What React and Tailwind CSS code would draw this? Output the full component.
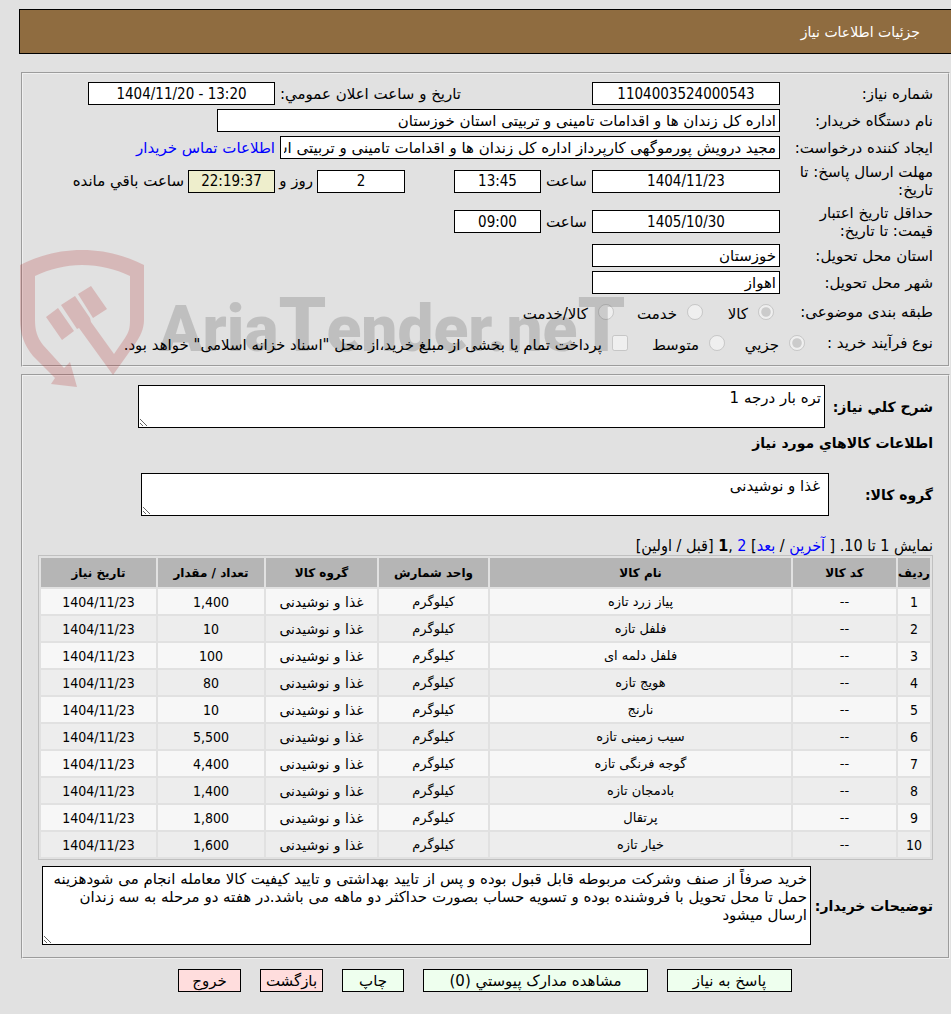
import React from 'react'

const columns = ['ردیف', 'کد کالا', 'نام کالا', 'واحد شمارش', 'گروه کالا', 'تعداد / مقدار', 'تاریخ نیاز']

const items = [
  { name: 'پیاز زرد تازه', count: '1,400' },
  { name: 'فلفل تازه', count: '10' },
  { name: 'فلفل دلمه ای', count: '100' },
  { name: 'هویج تازه', count: '80' },
  { name: 'نارنج', count: '10' },
  { name: 'سیب زمینی تازه', count: '5,500' },
  { name: 'گوجه فرنگی تازه', count: '4,400' },
  { name: 'بادمجان تازه', count: '1,400' },
  { name: 'پرتقال', count: '1,800' },
  { name: 'خیار تازه', count: '1,600' },
]

// digits are set in the condensed face, Persian text in the regular one
const digits = "font-['DejaVu_Sans_Condensed','DejaVu_Sans',sans-serif]"
const box = 'h-[23px] shrink-0 border border-black px-[3px] text-[15px]'
const area = 'block min-w-0 flex-1 border border-black bg-white px-[3px] py-[3px] text-[15px] leading-[18px]'
const panel = 'min-w-0 border-2 border-[#f0f0f0] [border-style:groove]'
const button = 'h-[23px] border border-black text-[15px] leading-[18px] whitespace-nowrap'

const Label = ({ id, children }) => (
  <label htmlFor={id} className="w-[153px] shrink-0">{children}</label>
)

const Choice = ({ id, type = 'radio', name, text, checked }) => (
  <div className="flex shrink-0 items-center gap-[10px]">
    <input id={id} type={type} name={name} defaultChecked={checked} disabled className="h-4 w-4 shrink-0" />
    <label htmlFor={id} className="whitespace-nowrap pt-1">{text}</label>
  </div>
)

const Watermark = () => (
  <div dir="ltr" aria-hidden="true" className="pointer-events-none absolute -left-px top-[177px] flex items-end">
    <svg viewBox="20 249 126 139" className="h-[139px] w-[126px] fill-[#af1919] opacity-20">
      <path d="M20 265C38 256 58 250 82 250C106 250 126 256 144 265V320C144 329 140 337 135 344L113 375L79 328L77 329L61 305L75 296L90 318L91 322L114 354L125 338C129 332 130 328 130 320V276C115 269 100 265 82 265C65 265 50 269 35 276V320C35 330 37 337 43 345L64 368L70 362L77 387L51 384L55 378L33 356C24 345 20 333 20 320Z" />
      <path d="M46 317L58 308L74 331L62 340ZM78 294L91 286L107 309L93 318Z" />
    </svg>
    <span className="mb-[18px] ms-[13px] whitespace-nowrap font-['Roboto',sans-serif] text-[64px] font-black leading-[80px] text-black/15">
      Aria<span className="text-[76px]">T</span>ender.ne<span className="text-[76px]">T</span>
    </span>
  </div>
)

const App = () => {
  return (
    <div
      dir="rtl"
      className="min-h-screen bg-[#e1e1e1] pb-[22px] pl-[19px] pt-[9px] font-['DejaVu_Sans',sans-serif] text-[15px] leading-[18px] text-black"
    >
      <header className="mb-[18px] flex h-[45px] items-center border-y border-l border-black bg-[#8f6c40] pr-[31px] text-[14px] text-white">
        <h1>جزئیات اطلاعات نیاز</h1>
      </header>

      <main className="relative ml-[2px] mr-px">
        <fieldset className={`${panel} mb-[7px] pb-2 pr-[15px] pt-[6px]`}>
          <div className="flex h-[27px] items-center">
            <Label id="number">شماره نیاز:</Label>
            <input id="number" readOnly defaultValue="1104003524000543" className={`${box} ${digits} w-[188px] bg-white text-center`} />
            <label htmlFor="announced" className="ms-[131px] w-[186px] shrink-0 whitespace-nowrap">تاریخ و ساعت اعلان عمومي:</label>
            <input id="announced" readOnly defaultValue="1404/11/20 - 13:20" dir="ltr" className={`${box} ${digits} w-[187px] bg-white text-center`} />
          </div>

          <div className="flex h-[27px] items-center">
            <Label id="buyer">نام دستگاه خریدار:</Label>
            <input id="buyer" readOnly defaultValue="اداره کل زندان ها و اقدامات تامینی و تربیتی استان خوزستان" className={`${box} w-[563px] bg-white`} />
          </div>

          <div className="flex h-[27px] items-center">
            <Label id="creator">ایجاد کننده درخواست:</Label>
            <input id="creator" readOnly defaultValue="مجید درویش پورموگهی کارپرداز اداره کل زندان ها و اقدامات تامینی و تربیتی استان خوزستان" className={`${box} w-[500px] bg-white`} />
            <a href="#contact" className="ms-[5px] whitespace-nowrap text-[#0000ff]">اطلاعات تماس خریدار</a>
          </div>

          <div className="flex h-10 items-center">
            <Label id="deadline">مهلت ارسال پاسخ: تا<br />تاریخ:</Label>
            <input id="deadline" readOnly defaultValue="1404/11/23" className={`${box} ${digits} w-[188px] bg-white text-center`} />
            <label htmlFor="deadline-time" className="w-[51px] shrink-0 text-center">ساعت</label>
            <input id="deadline-time" readOnly defaultValue="13:45" className={`${box} ${digits} w-[87px] bg-white text-center`} />
            <input id="days" readOnly defaultValue="2" className={`${box} ${digits} ms-[49px] w-[88px] bg-white text-center`} />
            <label htmlFor="days" className="w-[42px] shrink-0 pr-1">روز و</label>
            <input id="left" readOnly defaultValue="22:19:37" className={`${box} ${digits} w-[87px] bg-[#eeeecc] text-center`} />
            <label htmlFor="left" className="whitespace-nowrap pr-1">ساعت باقي مانده</label>
          </div>

          <div className="flex h-[41px] items-center">
            <Label id="valid">حداقل تاریخ اعتبار<br />قیمت: تا تاریخ:</Label>
            <input id="valid" readOnly defaultValue="1405/10/30" className={`${box} ${digits} w-[188px] bg-white text-center`} />
            <label htmlFor="valid-time" className="w-[51px] shrink-0 text-center">ساعت</label>
            <input id="valid-time" readOnly defaultValue="09:00" className={`${box} ${digits} w-[87px] bg-white text-center`} />
          </div>

          <div className="flex h-[27px] items-center">
            <Label id="province">استان محل تحویل:</Label>
            <input id="province" readOnly defaultValue="خوزستان" className={`${box} w-[188px] bg-white`} />
          </div>

          <div className="flex h-[27px] items-center">
            <Label id="city">شهر محل تحویل:</Label>
            <input id="city" readOnly defaultValue="اهواز" className={`${box} w-[188px] bg-white`} />
          </div>

          <div className="flex h-8 items-center" role="radiogroup" aria-labelledby="subject">
            <span id="subject" className="w-[159px] shrink-0">طبقه بندی موضوعی:</span>
            <div className="w-[71px] shrink-0"><Choice id="goods" name="subject" text="کالا" checked /></div>
            <div className="w-[89px] shrink-0"><Choice id="service" name="subject" text="خدمت" /></div>
            <Choice id="both" name="subject" text="کالا/خدمت" />
          </div>

          <div className="flex h-[29px] items-center" role="radiogroup" aria-labelledby="process">
            <span id="process" className="w-[128px] shrink-0">نوع فرآیند خرید :</span>
            <div className="w-[80px] shrink-0"><Choice id="small" name="process" text="جزیي" checked /></div>
            <div className="w-[97px] shrink-0"><Choice id="medium" name="process" text="متوسط" /></div>
            <Choice id="treasury" type="checkbox" text={'پرداخت تمام یا بخشی از مبلغ خرید،از محل "اسناد خزانه اسلامی" خواهد بود.'} />
          </div>
        </fieldset>

        <fieldset className={`${panel} pb-3 pl-[15px] pr-[15px] pt-[9px]`}>
          <div className="flex items-center pl-[100px]">
            <label htmlFor="summary" className="w-[108px] shrink-0 whitespace-nowrap text-[14px] font-bold">شرح کلي نیاز:</label>
            <textarea id="summary" readOnly defaultValue="تره بار درجه 1" className={`${area} h-[43px]`} />
          </div>

          <h2 className="mt-[6px] text-[14px] font-bold">اطلاعات کالاهاي مورد نیاز</h2>

          <div className="mt-[21px] flex items-center pl-[103px]">
            <label htmlFor="group" className="w-[104px] shrink-0 text-[14px] font-bold">گروه کالا:</label>
            <textarea id="group" readOnly defaultValue="غذا و نوشیدنی" className={`${area} h-[43px] pr-2`} />
          </div>

          <nav className={`${digits} mt-[21px] text-[16px]`}>
            نمایش 1 تا 10. [ <a href="#last" className="text-[#0000ff]">آخرین</a> / <a href="#next" className="text-[#0000ff]">بعد</a>]{' '}
            <a href="#page-2" className="text-[#0000ff]">2</a> ,<b>1</b> [قبل / اولین]
          </nav>

          <table className="w-full table-fixed border-separate border-spacing-[2px] border border-[#c0c0c0] text-center text-[13px]">
            <colgroup>
              <col className="w-[32px]" />
              <col className="w-[103px]" />
              <col />
              <col className="w-[109px]" />
              <col className="w-[111px]" />
              <col className="w-[106px]" />
              <col className="w-[115px]" />
            </colgroup>
            <thead>
              <tr className="h-[29px] bg-[#b5b5b5] text-[12px]">
                {columns.map(title => (
                  <th key={title} className="whitespace-nowrap p-0 font-bold">{title}</th>
                ))}
              </tr>
            </thead>
            <tbody>
              {items.map((item, index) => (
                <tr key={item.name} className="h-[25px] odd:bg-[#f7f7f7] even:bg-[#ededed]">
                  <td className={`${digits} text-[14px]`}>{index + 1}</td>
                  <td>--</td>
                  <td>{item.name}</td>
                  <td>کیلوگرم</td>
                  <td className="text-[14px]">غذا و نوشیدنی</td>
                  <td className={`${digits} text-[14px]`}>{item.count}</td>
                  <td className={`${digits} text-[14px]`}>1404/11/23</td>
                </tr>
              ))}
            </tbody>
          </table>

          <div className="mt-[6px] flex items-center pl-1">
            <label htmlFor="notes" className="w-[122px] shrink-0 whitespace-nowrap text-[14px] font-bold">توضیحات خریدار:</label>
            <textarea
              id="notes"
              readOnly
              defaultValue="خرید صرفاً از صنف وشرکت مربوطه قابل قبول بوده و پس از تایید بهداشتی و تایید کیفیت کالا معامله انجام می شودهزینه حمل تا محل تحویل با فروشنده بوده و تسویه حساب بصورت حداکثر دو ماهه می باشد.در هفته دو مرحله به سه زندان ارسال میشود"
              className={`${area} h-[79px]`}
            />
          </div>
        </fieldset>

        <Watermark />
      </main>

      <footer className="mt-[10px] flex justify-center gap-[19px]">
        <button className={`${button} w-[125px] bg-[#eeffee]`}>پاسخ به نیاز</button>
        <button className={`${button} w-[225px] bg-[#eeffee]`}>مشاهده مدارک پیوستي (0)</button>
        <button className={`${button} w-[62px] bg-[#eeffee]`}>چاپ</button>
        <button className={`${button} w-[63px] bg-[#ffdddd]`}>بازگشت</button>
        <button className={`${button} w-[63px] bg-[#ffdddd]`}>خروج</button>
      </footer>
    </div>
  )
}

export default App
